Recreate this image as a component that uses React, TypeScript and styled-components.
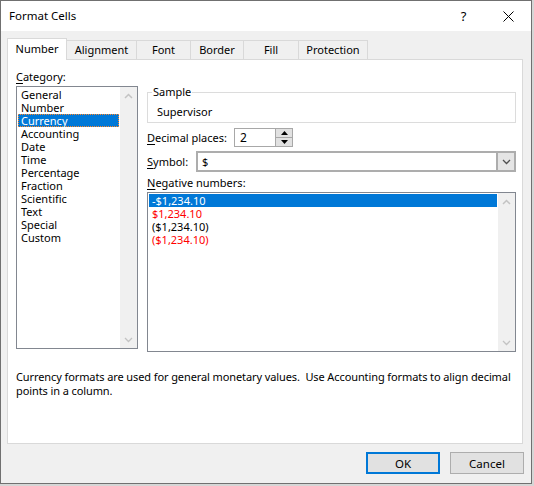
import styled, { createGlobalStyle } from "styled-components";

const GlobalStyle = createGlobalStyle`
  html, body {
    margin: 0;
    padding: 0;
    background: #d6d6d6;
  }
  body {
    font-family: "Segoe UI", "Noto Sans", sans-serif;
    font-size: 11px;
    color: #000;
  }
`;

const Window = styled.div`
  width: 532px;
  height: 484px;
  box-sizing: border-box;
  border: 1px solid #707070;
  background: #f0f0f0;
  display: flex;
  flex-direction: column;
`;

const TitleBar = styled.div`
  height: 30px;
  background: #fff;
  display: flex;
  align-items: center;
  padding-left: 8px;
  line-height: 16px;
  font-size: 11.5px;
`;

const TitleText = styled.span`
  flex: 1;
`;

const CaptionButton = styled.div`
  width: 45px;
  height: 30px;
  display: flex;
  align-items: center;
  justify-content: center;
  font-size: 13px;
`;

const Body = styled.div`
  flex: 1;
  display: flex;
  flex-direction: column;
  padding: 7px 8px 0 6px;
`;

const TabStrip = styled.div`
  display: flex;
  align-items: flex-end;
  height: 21px;
  position: relative;
  z-index: 1;
`;

const Tab = styled.div<{ $w: number; $active?: boolean }>`
  box-sizing: border-box;
  width: ${(p) => p.$w}px;
  height: ${(p) => (p.$active ? 22 : 19)}px;
  margin-bottom: ${(p) => (p.$active ? -1 : 0)}px;
  margin-left: -1px;
  border: 1px solid #d9d9d9;
  border-bottom: none;
  background: ${(p) => (p.$active ? "#fff" : "#f0f0f0")};
  display: flex;
  align-items: center;
  justify-content: center;
  padding-bottom: ${(p) => (p.$active ? 2 : 0)}px;
  line-height: 16px;
  &:first-child {
    margin-left: 0;
  }
`;

const Panel = styled.div`
  box-sizing: border-box;
  height: 385px;
  border: 1px solid #d9d9d9;
  background: #fff;
  padding: 9px 6px 0 8px;
  display: flex;
  flex-direction: column;
`;

const Columns = styled.div`
  display: grid;
  grid-template-columns: 122px 369px;
  column-gap: 9px;
`;

const Column = styled.div`
  display: flex;
  flex-direction: column;
`;

const Label = styled.div`
  line-height: 16px;
  white-space: nowrap;
  u {
    text-decoration: underline;
    text-underline-offset: 2px;
  }
`;

const ListBox = styled.div<{ $h: number }>`
  box-sizing: border-box;
  height: ${(p) => p.$h}px;
  margin-top: 1px;
  border: 1px solid #828790;
  background: #fff;
  display: flex;
`;

const ListItems = styled.div`
  flex: 1;
  padding: 1px 1px 0 1px;
`;

const Item = styled.div<{ $selected?: boolean; $focus?: boolean; $color?: string }>`
  box-sizing: border-box;
  height: 13px;
  line-height: 13px;
  padding-left: 2px;
  white-space: nowrap;
  color: ${(p) => (p.$selected ? "#fff" : p.$color || "#000")};
  background: ${(p) => (p.$selected ? "#0078d7" : "transparent")};
  border: 1px dotted ${(p) => (p.$focus ? "#ff8728" : "transparent")};
  display: flex;
  align-items: center;
`;

const ScrollBar = styled.div`
  width: 17px;
  background: #f0f0f0;
  display: flex;
  flex-direction: column;
  justify-content: space-between;
`;

const ScrollArrow = styled.div`
  height: 17px;
  display: flex;
  align-items: center;
  justify-content: center;
`;

const GroupBox = styled.fieldset`
  margin: 15px 0 0 0;
  padding: 4px 9px 2px 9px;
  border: 1px solid #dcdcdc;
  min-width: 0;
  line-height: 16px;
  legend {
    padding: 0 1px;
    margin-left: -5px;
    line-height: 16px;
  }
`;

const FieldRow = styled.div<{ $gap: number }>`
  display: flex;
  align-items: center;
  margin-top: ${(p) => p.$gap}px;
`;

const RowLabel = styled(Label)<{ $w: number }>`
  width: ${(p) => p.$w}px;
  flex-shrink: 0;
`;

const SpinBox = styled.div`
  box-sizing: border-box;
  width: 59px;
  height: 19px;
  border: 1px solid #a8a8a8;
  display: flex;
  background: #fff;
`;

const SpinValue = styled.div`
  flex: 1;
  padding-left: 5px;
  line-height: 17px;
  font-size: 12px;
`;

const SpinButtons = styled.div`
  width: 16px;
  display: flex;
  flex-direction: column;
  border-left: 1px solid #a8a8a8;
`;

const SpinButton = styled.div<{ $top?: boolean }>`
  flex: 1;
  background: #e1e1e1;
  border-bottom: ${(p) => (p.$top ? "1px solid #a8a8a8" : "none")};
  display: flex;
  align-items: center;
  justify-content: center;
`;

const Select = styled.div`
  box-sizing: border-box;
  flex: 1;
  height: 21px;
  border: 2px solid #adadad;
  background: #fff;
  display: flex;
`;

const SelectValue = styled.div`
  flex: 1;
  padding-left: 4px;
  line-height: 17px;
`;

const DropButton = styled.div`
  width: 16px;
  background: #e5e5e5;
  border-left: 2px solid #adadad;
  display: flex;
  align-items: center;
  justify-content: center;
`;

const Description = styled.div`
  margin-top: 18px;
  line-height: 14px;
  white-space: nowrap;
  letter-spacing: -0.1px;
`;

const ButtonRow = styled.div`
  display: flex;
  justify-content: flex-end;
  gap: 10px;
  margin: 8px -1px 0 0;
`;

const Button = styled.div<{ $default?: boolean }>`
  box-sizing: border-box;
  width: 74px;
  height: 22px;
  background: #e1e1e1;
  border: ${(p) => (p.$default ? "2px solid #0078d7" : "1px solid #adadad")};
  display: flex;
  align-items: center;
  justify-content: center;
  font-size: 11.5px;
`;

const ChevronUp = () => (
  <svg width="9" height="6" viewBox="0 0 9 6">
    <polyline points="1,5 4.5,1.5 8,5" fill="none" stroke="#c3c3c3" strokeWidth="1.5" />
  </svg>
);

const ChevronDown = ({ color = "#c3c3c3" }: { color?: string }) => (
  <svg width="9" height="6" viewBox="0 0 9 6">
    <polyline points="1,1 4.5,4.5 8,1" fill="none" stroke={color} strokeWidth="1.3" />
  </svg>
);

const Triangle = ({ up }: { up?: boolean }) => (
  <svg width="7" height="4" viewBox="0 0 7 4">
    <polygon points={up ? "0,4 3.5,0 7,4" : "0,0 3.5,4 7,0"} fill="#000" />
  </svg>
);

const categories = [
  "General",
  "Number",
  "Currency",
  "Accounting",
  "Date",
  "Time",
  "Percentage",
  "Fraction",
  "Scientific",
  "Text",
  "Special",
  "Custom",
];

const negatives = [
  { text: "-$1,234.10", color: "#000" },
  { text: "$1,234.10", color: "#ff0000" },
  { text: "($1,234.10)", color: "#000" },
  { text: "($1,234.10)", color: "#ff0000" },
];

const tabs = [
  { name: "Number", w: 60 },
  { name: "Alignment", w: 71 },
  { name: "Font", w: 55 },
  { name: "Border", w: 54 },
  { name: "Fill", w: 56 },
  { name: "Protection", w: 70 },
];

export default function App() {
  return (
    <>
      <GlobalStyle />
      <Window>
        <TitleBar>
          <TitleText>Format Cells</TitleText>
          <CaptionButton>?</CaptionButton>
          <CaptionButton>
            <svg width="11" height="11" viewBox="0 0 11 11">
              <path d="M0.5 0.5 L10.5 10.5 M10.5 0.5 L0.5 10.5" stroke="#000" strokeWidth="1" />
            </svg>
          </CaptionButton>
        </TitleBar>
        <Body>
          <TabStrip>
            {tabs.map((t, i) => (
              <Tab key={t.name} $w={t.w} $active={i === 0}>
                {t.name}
              </Tab>
            ))}
          </TabStrip>
          <Panel>
            <Columns>
              <Column>
                <Label>
                  <u>C</u>ategory:
                </Label>
                <ListBox $h={263}>
                  <ListItems>
                    {categories.map((c) => (
                      <Item key={c} $selected={c === "Currency"} $focus={c === "Currency"}>
                        {c}
                      </Item>
                    ))}
                  </ListItems>
                  <ScrollBar>
                    <ScrollArrow>
                      <ChevronUp />
                    </ScrollArrow>
                    <ScrollArrow>
                      <ChevronDown />
                    </ScrollArrow>
                  </ScrollBar>
                </ListBox>
              </Column>
              <Column>
                <GroupBox>
                  <legend>Sample</legend>
                  Supervisor
                </GroupBox>
                <FieldRow $gap={5}>
                  <RowLabel $w={87}>
                    <u>D</u>ecimal places:
                  </RowLabel>
                  <SpinBox>
                    <SpinValue>2</SpinValue>
                    <SpinButtons>
                      <SpinButton $top>
                        <Triangle up />
                      </SpinButton>
                      <SpinButton>
                        <Triangle />
                      </SpinButton>
                    </SpinButtons>
                  </SpinBox>
                </FieldRow>
                <FieldRow $gap={4}>
                  <RowLabel $w={49}>
                    <u>S</u>ymbol:
                  </RowLabel>
                  <Select>
                    <SelectValue>$</SelectValue>
                    <DropButton>
                      <ChevronDown color="#505050" />
                    </DropButton>
                  </Select>
                </FieldRow>
                <Label style={{ marginTop: 3 }}>
                  <u>N</u>egative numbers:
                </Label>
                <ListBox $h={160}>
                  <ListItems>
                    {negatives.map((n, i) => (
                      <Item key={i} $selected={i === 0} $color={n.color}>
                        {n.text}
                      </Item>
                    ))}
                  </ListItems>
                  <ScrollBar>
                    <ScrollArrow>
                      <ChevronUp />
                    </ScrollArrow>
                    <ScrollArrow>
                      <ChevronDown />
                    </ScrollArrow>
                  </ScrollBar>
                </ListBox>
              </Column>
            </Columns>
            <Description>
              Currency formats are used for general monetary values.&nbsp; Use Accounting formats to align decimal
              <br />
              points in a column.
            </Description>
          </Panel>
          <ButtonRow>
            <Button $default>OK</Button>
            <Button>Cancel</Button>
          </ButtonRow>
        </Body>
      </Window>
    </>
  );
}
